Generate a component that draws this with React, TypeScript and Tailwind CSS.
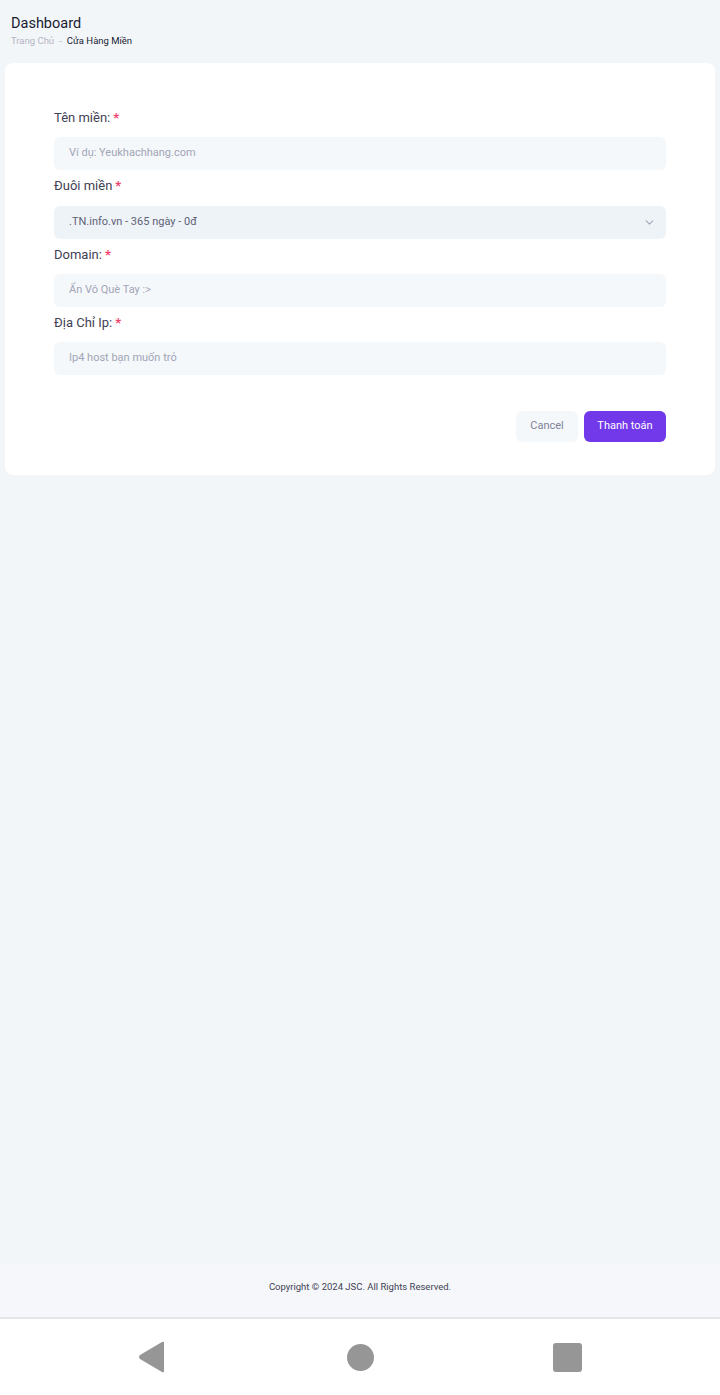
import { ChevronDown } from "lucide-react";

function Field({ label, colon = true, placeholder }: { label: string; colon?: boolean; placeholder: string }) {
  return (
    <div>
      <label className="flex items-center text-[13px] leading-[18px] text-[#3f4254]">
        {label}
        {colon ? ":" : ""}
        <span className="ml-[3px] text-[#f1416c] font-bold">*</span>
      </label>
      <div className="mt-[10px] h-[33px] rounded-[6px] bg-[#f5f8fa] flex items-center px-[15px] text-[11px] text-[#a1a5b7]">
        {placeholder}
      </div>
    </div>
  );
}

export default function App() {
  return (
    <div
      className="w-[720px] h-[1395px] flex flex-col bg-[#f3f6f9]"
      style={{ fontFamily: "Roboto, 'Noto Sans', sans-serif" }}
    >
      <div className="flex-1 flex flex-col">
        <div className="px-[11px] pt-[14px]">
          <h1 className="text-[14.5px] leading-[19px] text-[#181c32]">Dashboard</h1>
          <div className="mt-[2px] flex items-center text-[9.5px] leading-[12px]">
            <span className="text-[#b5b5c3]">Trang Chủ</span>
            <span className="mx-[5px] text-[#b5b5c3]">-</span>
            <span className="text-[#181c32]">Cửa Hàng Miền</span>
          </div>
        </div>

        <div className="mx-[5px] mt-[16px] bg-white rounded-[8px] px-[49px] pt-[46px] pb-[33px]">
          <div className="flex flex-col gap-[7px]">
            <Field label="Tên miền" placeholder="Ví dụ: Yeukhachhang.com" />
            <div>
              <label className="flex items-center text-[13px] leading-[18px] text-[#3f4254]">
                Đuôi miền
                <span className="ml-[3px] text-[#f1416c] font-bold">*</span>
              </label>
              <div className="mt-[11px] h-[33px] rounded-[6px] bg-[#eef3f7] flex items-center justify-between px-[15px] text-[11px] text-[#5e6278]">
                <span>.TN.info.vn - 365 ngày - 0đ</span>
                <ChevronDown size={13} strokeWidth={2} className="text-[#a1a5b7] -mr-[5px]" />
              </div>
            </div>
            <Field label="Domain" placeholder="Ẩn Vô Què Tay :>" />
            <Field label="Địa Chỉ Ip" placeholder="Ip4 host bạn muốn trỏ" />
          </div>

          <div className="mt-[36px] flex justify-end gap-[6px]">
            <button className="h-[31px] w-[62px] rounded-[6px] bg-[#f5f8fa] text-[11px] text-[#7e8299]">
              Cancel
            </button>
            <button className="h-[31px] w-[82px] rounded-[6px] bg-[#7239ea] text-[11px] text-white">
              Thanh toán
            </button>
          </div>
        </div>
      </div>

      <div className="h-[54px] pb-[5px] bg-[#f5f7fa] flex items-center justify-center text-[9.5px] text-[#3f4254]">
        Copyright © 2024 JSC. All Rights Reserved.
      </div>

      <div className="h-[78px] border-t-2 border-[#e4e6e8] bg-white flex items-center pl-[138px]">
        <svg width="28" height="32" viewBox="0 0 28 32">
          <path d="M26 2 L26 30 Q26 32 24 31 L2 18 Q0 16 2 14 L24 1 Q26 0 26 2 Z" fill="#969696" />
        </svg>
        <div className="ml-[181px] w-[27px] h-[27px] rounded-full bg-[#969696]" />
        <div className="ml-[179px] w-[29px] h-[29px] rounded-[3px] bg-[#969696]" />
      </div>
    </div>
  );
}
